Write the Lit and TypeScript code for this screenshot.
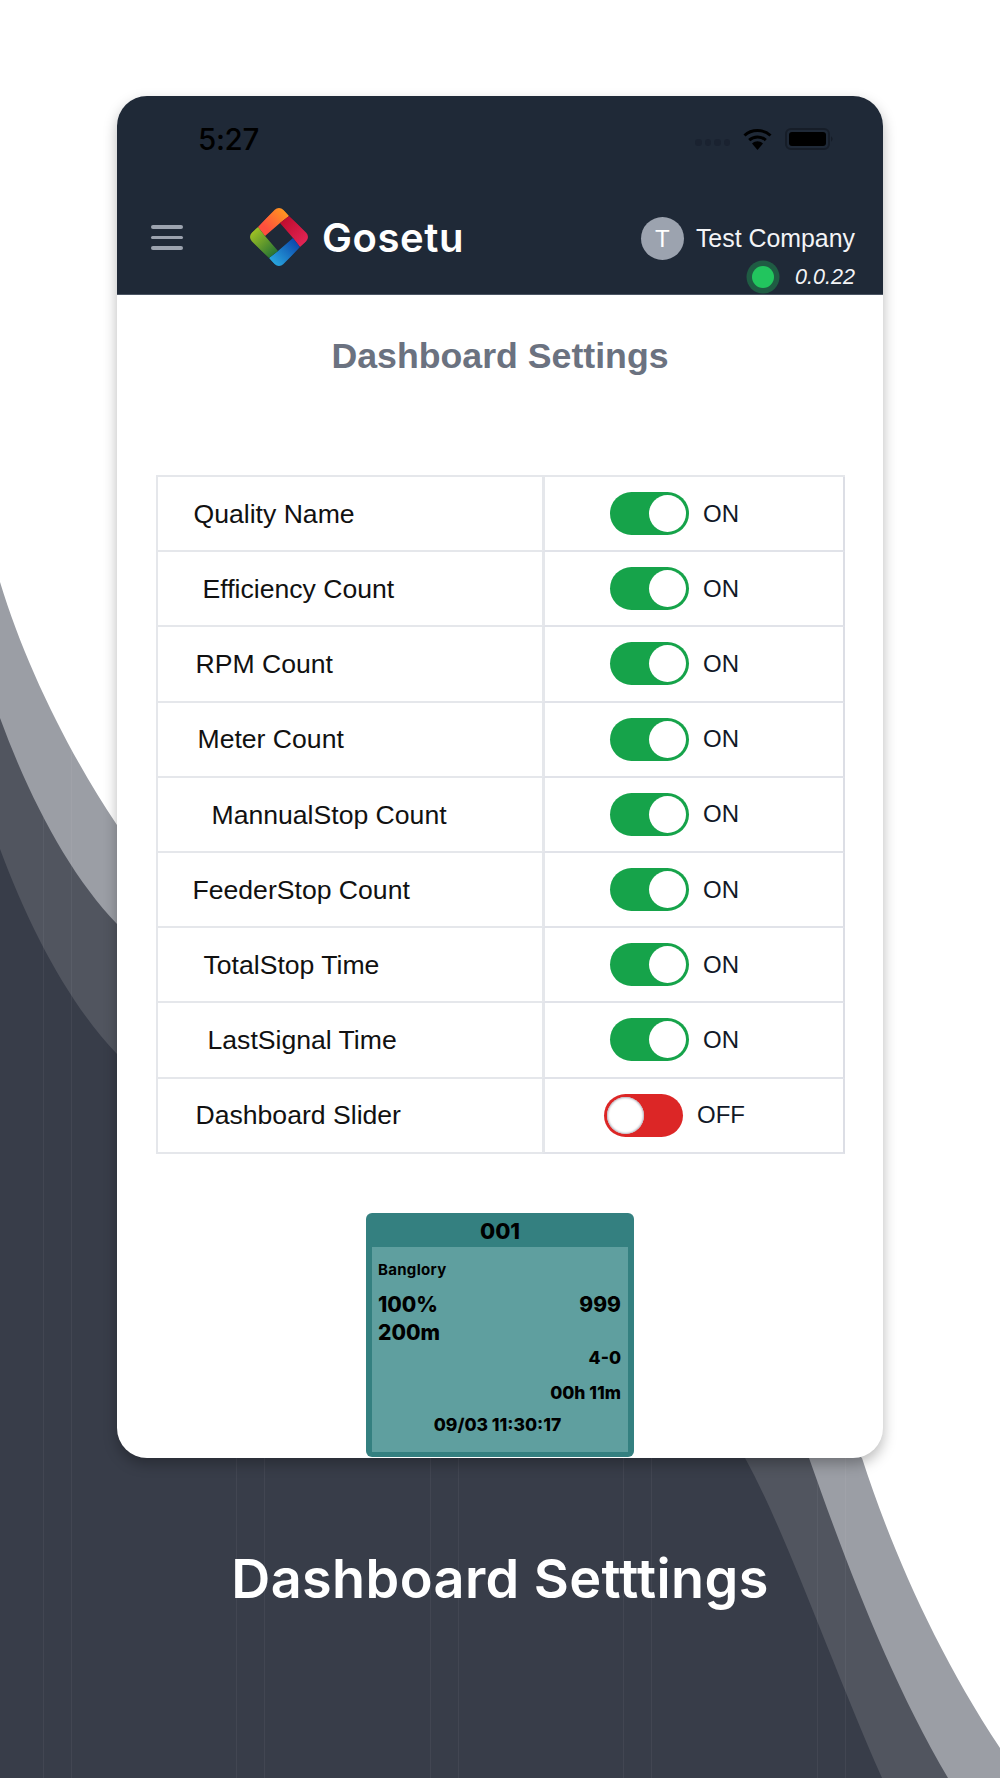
import { LitElement, html, css, svg } from "lit";
import { customElement } from "lit/decorators.js";

const ROWS: [string, number, boolean][] = [
  ["Quality Name", 36, true],
  ["Efficiency Count", 45, true],
  ["RPM Count", 38, true],
  ["Meter Count", 40, true],
  ["MannualStop Count", 54, true],
  ["FeederStop Count", 35, true],
  ["TotalStop Time", 46, true],
  ["LastSignal Time", 50, true],
  ["Dashboard Slider", 38, false],
];

const LINES = [
  [43, "mid"], [71, "gray"], [236, "gray"], [264, "gray"], [430, "gray"],
  [458, "gray"], [623, "gray"], [651, "gray"], [817, "mid"], [845, "gray"],
] as const;

const GRAY = "M0 582C25 665 70 755 117 825L862 1458C890 1545 935 1650 1000 1748V1778H0Z";
const MID = "M0 718C30 800 70 875 117 924L809 1458C845 1560 890 1680 948 1778H0Z";
const DARK = "M0 849C30 930 70 1005 117 1054L745 1458C785 1530 830 1660 882 1778H0Z";

@customElement("app-root")
export class AppRoot extends LitElement {
  static styles = css`
    :host { display: block; position: relative; width: 1000px; height: 1778px; overflow: hidden; background: #fff; font-family: "Liberation Sans", Arial, sans-serif; }
    .bg { position: absolute; left: 0; top: 0; width: 1000px; height: 1778px; display: block; }
    .page { position: relative; display: flex; flex-direction: column; align-items: center; padding-top: 96px; }
    .card { width: 766px; height: 1362px; border-radius: 30px; overflow: hidden; background: #fff; box-shadow: 0 6px 14px rgba(0,0,0,.28); display: flex; flex-direction: column; }
    .head { height: 199px; flex: none; background: #1f2937; display: flex; flex-direction: column; box-sizing: border-box; border-bottom: 1px solid #4b5563; }
    .status { height: 112px; flex: none; display: flex; align-items: flex-start; padding: 26px 49px 0 81px; box-sizing: border-box; }
    .time { font: 500 29.5px/34px Inter, sans-serif; color: #000; letter-spacing: -.3px; }
    .sys { margin-left: auto; display: flex; align-items: flex-start; }
    .dots { display: flex; gap: 3px; margin-top: 17px; margin-right: 13px; }
    .dots i { width: 6.5px; height: 6.5px; border-radius: 50%; background: #1a2230; }
    .wifi { width: 29px; height: 22px; display: block; margin-top: 6px; margin-right: 13px; }
    .batt { width: 49px; height: 22px; display: block; margin-top: 6px; }
    .nav { flex: 1; display: flex; align-items: flex-start; padding-right: 28px; }
    .burger { width: 32px; margin: 17px 0 0 34px; display: flex; flex-direction: column; gap: 7px; }
    .burger i { height: 3.5px; border-radius: 2px; background: #9ca3af; }
    .logo { width: 58px; height: 58px; display: block; margin-left: 67px; }
    .brand { font: 600 40px/60px Inter, sans-serif; color: #fff; margin-left: 14px; letter-spacing: .6px; }
    .user { margin-left: auto; padding-top: 9px; display: flex; flex-direction: column; align-items: flex-end; }
    .u1 { display: flex; align-items: center; gap: 12px; height: 43px; }
    .avatar { width: 43px; height: 43px; border-radius: 50%; background: #9ca3af; color: #fff; font-size: 24px; display: flex; align-items: center; justify-content: center; }
    .name { color: #f3f4f6; font-size: 24.9px; }
    .u2 { display: flex; align-items: center; gap: 21px; height: 34px; }
    .dot { width: 22px; height: 22px; border-radius: 50%; background: #22c55e; box-shadow: 0 0 0 5.5px rgba(34,197,94,.33); }
    .ver { color: #f3f4f6; font-size: 21.6px; font-style: italic; }
    h1 { margin: 0; text-align: center; font-size: 35.7px; line-height: 40px; font-weight: 700; color: #6b7280; padding-top: 41px; }
    .table { margin: 99px 38.5px 0 38.5px; display: grid; grid-template-columns: 386px 1fr; border-top: 2px solid #e5e7eb; }
    .lab { height: 75.2px; box-sizing: border-box; display: flex; align-items: center; padding-top: 1.5px; font-size: 26.6px; color: #111; border-left: 2px solid #e5e7eb; border-bottom: 2.5px solid #e5e7eb; }
    .val { height: 75.2px; box-sizing: border-box; display: flex; align-items: center; justify-content: center; gap: 14px; padding-right: 38px; font-size: 24px; color: #111827; border-left: 3px solid #e5e7eb; border-right: 2px solid #dcdee5; border-bottom: 2.5px solid #e1e3e9; }
    .tog { width: 79px; height: 43px; border-radius: 22px; box-sizing: border-box; padding: 3px; display: flex; }
    .tog i { width: 37px; height: 37px; border-radius: 50%; background: #fff; }
    .on { background: #16a34a; justify-content: flex-end; }
    .off { background: #dc2626; justify-content: flex-start; }
    .off i { box-shadow: inset 0 0 2px 1px #b4b6bf; }
    .mini { align-self: center; margin-top: 59px; width: 268px; height: 244px; box-sizing: border-box; background: #348080; border-radius: 6px; padding: 0 6px 5px; color: #000; font-family: Inter, sans-serif; font-weight: 800; display: flex; flex-direction: column; }
    .mh { height: 34px; flex: none; text-align: center; font-size: 22px; line-height: 36px; }
    .mb { flex: 1; background: #5f9f9f; padding: 8px 7px 0 6px; font-size: 17.5px; }
    .mb div { line-height: 22px; }
    .mb .q { font-size: 15px; line-height: 30px; height: 28px; font-weight: 700; letter-spacing: .3px; }
    .big { display: flex; justify-content: space-between; font-size: 21px; }
    .mb .big { line-height: 28px; }
    .mb .r1 { margin-top: 8px; }
    .r { text-align: right; }
    .mb .t2 { margin-top: 13px; }
    .mb .t3 { margin-top: 10px; text-align: center; padding-right: 4px; }
    .cap { margin-top: 89px; font: 600 54px/64px Inter, sans-serif; color: #fff; letter-spacing: .4px; }
  `;

  private bg() {
    return html`<svg class="bg" viewBox="0 0 1000 1778" aria-hidden="true">
      <defs>
        <clipPath id="cg"><path d=${GRAY}></path></clipPath>
        <clipPath id="cm"><path d=${MID}></path></clipPath>
      </defs>
      <path d=${GRAY} fill="#9b9ea5"></path>
      <path d=${MID} fill="#51555f"></path>
      <path d=${DARK} fill="#383d49"></path>
      ${LINES.map(([x, k]) => svg`<rect x=${x} y="500" width="1" height="1278" fill="#fff" fill-opacity=".05" clip-path=${k === "gray" ? "url(#cg)" : "url(#cm)"}></rect>`)}
    </svg>`;
  }

  private logo() {
    return html`<svg class="logo" viewBox="0 0 58 58" aria-label="Gosetu logo">
      <defs>
        <clipPath id="lc"><rect x="6.75" y="6.75" width="44.5" height="44.5" rx="6" transform="rotate(45 29 29)"></rect></clipPath>
        <linearGradient id="lo" x1="1" y1="0" x2="0" y2="1"><stop offset=".1" stop-color="#ff9f1c"></stop><stop offset=".75" stop-color="#ff4f3e"></stop></linearGradient>
        <linearGradient id="lr" x1="0" y1="0" x2="1" y2="1"><stop offset=".1" stop-color="#bf0d2e"></stop><stop offset="1" stop-color="#ea2a5e"></stop></linearGradient>
        <linearGradient id="lb" x1="1" y1="0" x2="0" y2="1"><stop offset=".1" stop-color="#0b46ab"></stop><stop offset=".85" stop-color="#2aa9df"></stop></linearGradient>
        <linearGradient id="lg" x1="0" y1="0" x2="1" y2="1"><stop offset=".15" stop-color="#a3c423"></stop><stop offset=".9" stop-color="#257234"></stop></linearGradient>
      </defs>
      <g clip-path="url(#lc)">
        <polygon points="8,19 29,-4 39,8 30,15 15,28" fill="url(#lo)"></polygon>
        <polygon points="39,8 62,29 50,39 43,30 30,15" fill="url(#lr)"></polygon>
        <polygon points="50,39 29,62 19,50 28,43 43,30" fill="url(#lb)"></polygon>
        <polygon points="19,50 -4,29 8,19 15,28 28,43" fill="url(#lg)"></polygon>
      </g>
    </svg>`;
  }

  private header() {
    return html`<div class="head">
      <div class="status">
        <span class="time">5:27</span>
        <div class="sys">
          <div class="dots"><i></i><i></i><i></i><i></i></div>
          <svg class="wifi" viewBox="0 0 29 22" aria-hidden="true">
            <path d="M1.5 7.5C8.5 .8 20.5 .8 27.5 7.5" fill="none" stroke="#000" stroke-width="3"></path>
            <path d="M6.2 12.2C10.8 7.8 18.2 7.8 22.8 12.2" fill="none" stroke="#000" stroke-width="3"></path>
            <path d="M9 15.5C12.5 12.6 16.5 12.6 20 15.5L14.5 22Z" fill="#000"></path>
          </svg>
          <svg class="batt" viewBox="0 0 49 22" aria-hidden="true">
            <rect x="1" y="1" width="43" height="20" rx="5" fill="none" stroke="#161d28" stroke-width="2"></rect>
            <rect x="4" y="4" width="37" height="14" rx="3" fill="#000"></rect>
            <path d="M46 8.500C48 9 48 13 46 13.500Z" fill="#161d28"></path>
          </svg>
        </div>
      </div>
      <div class="nav">
        <div class="burger"><i></i><i></i><i></i></div>
        ${this.logo()}
        <span class="brand">Gosetu</span>
        <div class="user">
          <div class="u1"><span class="avatar">T</span><span class="name">Test Company</span></div>
          <div class="u2"><span class="dot"></span><span class="ver">0.0.22</span></div>
        </div>
      </div>
    </div>`;
  }

  render() {
    return html`${this.bg()}
      <div class="page">
        <div class="card">
          ${this.header()}
          <h1>Dashboard Settings</h1>
          <div class="table">
            ${ROWS.map(([name, pad, on]) => html`
              <div class="lab" style="padding-left:${pad}px">${name}</div>
              <div class="val"><span class="tog ${on ? "on" : "off"}"><i></i></span><span>${on ? "ON" : "OFF"}</span></div>
            `)}
          </div>
          <div class="mini">
            <div class="mh">001</div>
            <div class="mb">
              <div class="q">Banglory</div>
              <div class="big r1"><span>100%</span><span>999</span></div>
              <div class="big"><span>200m</span></div>
              <div class="r">4-0</div>
              <div class="r t2">00h 11m</div>
              <div class="t3">09/03 11:30:17</div>
            </div>
          </div>
        </div>
        <div class="cap">Dashboard Setttings</div>
      </div>`;
  }
}
